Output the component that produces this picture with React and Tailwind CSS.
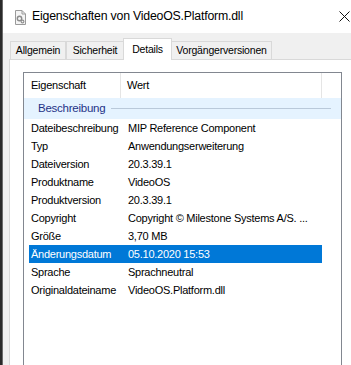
import React from 'react';

const rows = [
  ['Dateibeschreibung', 'MIP Reference Component'],
  ['Typ', 'Anwendungserweiterung'],
  ['Dateiversion', '20.3.39.1'],
  ['Produktname', 'VideoOS'],
  ['Produktversion', '20.3.39.1'],
  ['Copyright', 'Copyright © Milestone Systems A/S. ...'],
  ['Größe', '3,70 MB'],
  ['Änderungsdatum', '05.10.2020 15:53'],
  ['Sprache', 'Sprachneutral'],
  ['Originaldateiname', 'VideoOS.Platform.dll'],
];

const tabs = [
  { label: 'Allgemein', w: 'w-[56px]' },
  { label: 'Sicherheit', w: 'w-[58px]' },
  { label: 'Details', w: 'w-[49px]', active: true },
  { label: 'Vorgängerversionen', w: 'w-[101px]' },
];

const FileIcon = () => (
  <svg width="14" height="15" viewBox="0 0 14 15">
    <path d="M2.5 0.5 H9 L12.5 4 V14.5 H2.5 Z" fill="#f4f4f4" stroke="#9a9a9a" />
    <path d="M9 0.5 V4 H12.5" fill="none" stroke="#9a9a9a" />
    <circle cx="6.5" cy="8.5" r="2.2" fill="none" stroke="#8c8c8c" strokeWidth="1.4" />
    <circle cx="9.5" cy="11.5" r="1.4" fill="none" stroke="#8c8c8c" strokeWidth="1.1" />
  </svg>
);

export default function App() {
  return (
    <div className="w-[351px] h-[365px] flex overflow-hidden font-['Liberation_Sans',Arial,sans-serif] text-black">
      <div className="w-[3px] bg-[#2a2a2a] border-r border-[#6b6b6b]" />

      <div className="flex-1 flex flex-col bg-[#f0f0f0]">
        {/* title bar */}
        <div className="h-[33px] bg-white flex items-center shrink-0">
          <div className="ml-[10px] mt-[1px] flex items-center">
            <FileIcon />
          </div>
          <span className="ml-[5px] text-[12.3px] tracking-[-0.2px] text-[#000]">
            Eigenschaften von VideoOS.Platform.dll
          </span>
          <svg className="ml-auto mr-[1px]" width="11" height="11" viewBox="0 0 11 11">
            <path d="M0.5 0.5 L10.5 10.5 M10.5 0.5 L0.5 10.5" stroke="#111" strokeWidth="1" />
          </svg>
        </div>

        {/* tabs */}
        <div className="flex items-end pl-[7px] pt-[4px] h-[26px] shrink-0 relative z-10">
          {tabs.map((t) =>
            t.active ? (
              <div
                key={t.label}
                className={`${t.w} h-[22px] -mx-[1px] mb-[-1px] bg-white border border-b-0 border-[#d9d9d9] flex items-start justify-center pt-[3px] text-[10.5px] tracking-[-0.2px]`}
              >
                {t.label}
              </div>
            ) : (
              <div
                key={t.label}
                className={`${t.w} h-[18px] bg-[#f0f0f0] border border-b-0 border-[#d9d9d9] flex items-center justify-center text-[10.5px] tracking-[-0.2px]`}
              >
                {t.label}
              </div>
            )
          )}
        </div>

        {/* tab panel */}
        <div className="flex-1 ml-[6px] bg-white border-l border-t border-[#d9d9d9] pl-[13px] pt-[12px]">
          <div className="w-[319px] h-[300px] border border-[#828790] bg-white text-[11px] tracking-[-0.25px]">
            {/* header */}
            <div className="h-[25px] flex">
              <div className="w-[97px] border-r border-[#e5e5e5] pl-[7px] flex items-center">Eigenschaft</div>
              <div className="w-[201px] border-r border-[#e5e5e5] pl-[6px] flex items-center">Wert</div>
            </div>

            {/* group */}
            <div className="h-[21px] bg-[#e5f3ff] flex items-center pl-[14px] pr-[10px]">
              <span className="text-[#1e3287] text-[11.5px]">Beschreibung</span>
              <div className="flex-1 ml-[6px] h-px bg-[#b9c9da]" />
            </div>

            <div>
              {rows.map(([k, v]) => {
                const sel = k === 'Änderungsdatum';
                return (
                  <div
                    key={k}
                    className={`h-[18px] ml-[5px] w-[293px] flex items-center ${sel ? 'bg-[#0078d7] text-white' : ''}`}
                  >
                    <div className="w-[99px] pl-[2px] whitespace-nowrap">{k}</div>
                    <div className="flex-1 whitespace-nowrap">{v}</div>
                  </div>
                );
              })}
            </div>
          </div>
        </div>
      </div>
    </div>
  );
}
